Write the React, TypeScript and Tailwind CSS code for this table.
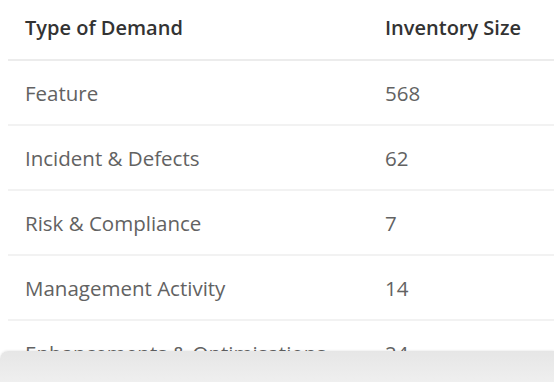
const rows = [
  { type: 'Feature', size: 568 },
  { type: 'Incident & Defects', size: 62 },
  { type: 'Risk & Compliance', size: 7 },
  { type: 'Management Activity', size: 14 },
  { type: 'Enhancements & Optimisations', size: 24 },
]

export default function App() {
  return (
    <div
      className="w-[554px] h-[386px] bg-white overflow-hidden flex flex-col"
      style={{ fontFamily: '"Open Sans", "Noto Sans", sans-serif' }}
    >
      {/* scrollable table body */}
      <div className="h-[351px] overflow-hidden pl-2 shrink-0">
        <div className="flex h-[61px] items-center border-b-2 border-[#ececec] text-[20px] font-semibold text-[#333]">
          <div className="w-[377px] pl-[17px] pb-[4px]">Type of Demand</div>
          <div className="pb-[4px]">Inventory Size</div>
        </div>
        {rows.map((r) => (
          <div
            key={r.type}
            className="flex h-[65px] items-center pt-[2px] border-b-2 border-[#f2f2f2] text-[20.5px] text-[#626262]"
          >
            <div className="w-[377px] pl-[17px] whitespace-nowrap">{r.type}</div>
            <div>{r.size}</div>
          </div>
        ))}
      </div>
      {/* footer strip */}
      <div className="h-[31px] shrink-0 rounded-tl-lg bg-gradient-to-b from-[#e6e6e6] to-[#efefef] shadow-[0_-1px_2px_rgba(0,0,0,0.06)]" />
      <div className="flex-1 bg-white" />
    </div>
  )
}
